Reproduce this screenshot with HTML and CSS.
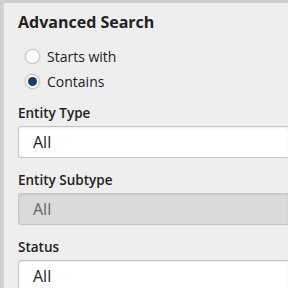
FILE: index.html
```html
<!DOCTYPE html>
<html lang="en">
<head>
    <meta charset="UTF-8">
    <title>Advanced Search</title>
    <link rel="stylesheet" href="styles.css">
</head>
<body>
    <div class="panel">
        <h2 class="title">Advanced Search</h2>
        <div class="radios">
            <label class="radio"><input type="radio" name="match"><span class="dot"></span>Starts with</label>
            <label class="radio"><input type="radio" name="match" checked><span class="dot"></span>Contains</label>
        </div>
        <div class="field first">
            <label class="field-label">Entity Type</label>
            <div class="select">All</div>
        </div>
        <div class="field">
            <label class="field-label">Entity Subtype</label>
            <div class="select disabled">All</div>
        </div>
        <div class="field">
            <label class="field-label">Status</label>
            <div class="select">All</div>
        </div>
    </div>
</body>
</html>
```

FILE: styles.css
```css
body {
    margin: 0;
    font-family: "Open Sans", sans-serif;
    background-color: #cfcfcf;
    padding-top: 3px;
    overflow: hidden;
}
.panel {
    background-color: #eeeeee;
    border-left: 1px solid #d6d6d6;
    margin-left: 3px;
    padding: 8px 0 0 14px;
    height: 300px;
}
.title {
    margin: 0;
    font-size: 16px;
    font-weight: 700;
    color: #222;
    line-height: 22px;
}
.radios {
    display: flex;
    flex-direction: column;
    gap: 4px;
    margin: 13px 0 0 7px;
}
.radio {
    display: flex;
    align-items: center;
    font-size: 14px;
    color: #222;
    height: 21px;
    font-weight: 500;
}
.radio input {
    display: none;
}
.dot {
    width: 13px;
    height: 13px;
    border-radius: 50%;
    border: 1.5px solid #c4c4c4;
    background: #fff;
    margin-right: 7px;
    box-shadow: 0 0 2px rgba(0,0,0,0.15);
    display: flex;
    align-items: center;
    justify-content: center;
}
.radio input:checked + .dot::after {
    content: "";
    width: 9px;
    height: 9px;
    border-radius: 50%;
    background: #173d6e;
}
.field {
    margin-top: 12px;
}
.field.first {
    margin-top: 11px;
}
.field-label {
    display: block;
    font-size: 13.5px;
    font-weight: 600;
    color: #222;
    line-height: 20px;
    margin-bottom: 3px;
}
.select {
    height: 30px;
    border: 1px solid #c6c6c6;
    border-right: none;
    border-radius: 3px 0 0 3px;
    background: #fff;
    box-shadow: inset 0 1px 2px rgba(0,0,0,0.08);
    font-size: 16px;
    line-height: 30px;
    padding-left: 14px;
    color: #222;
}
.select.disabled {
    background: #dadada;
    color: #666;
}
```
